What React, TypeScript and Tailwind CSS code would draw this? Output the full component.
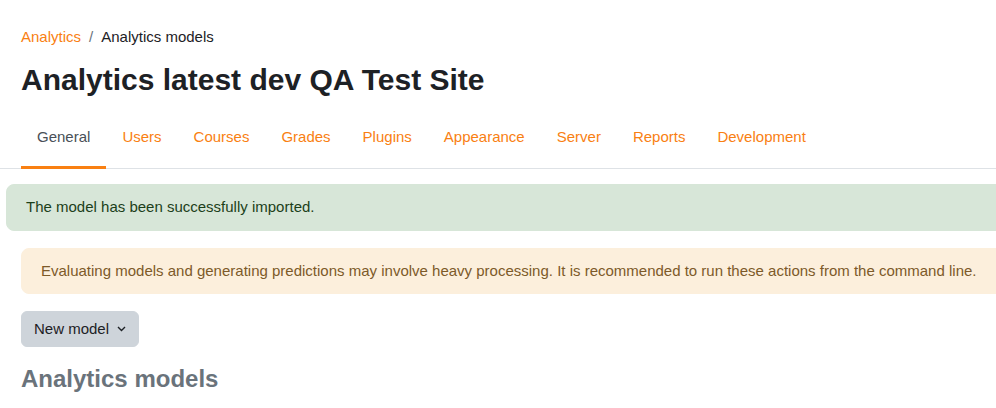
import React from "react";

const tabs = ["General", "Users", "Courses", "Grades", "Plugins", "Appearance", "Server", "Reports", "Development"];

export default function App() {
  return (
    <div className="w-[996px] h-[408px] overflow-hidden bg-white text-[15px] leading-[1.5] text-[#1d2125]" style={{ fontFamily: '"Liberation Sans", Arial, sans-serif' }}>
      <div className="pl-[21px] pt-[26px]">
        <nav className="flex items-center">
          <span className="text-[#f98012]">Analytics</span>
          <span className="px-[8px] text-[#6a737b]">/</span>
          <span>Analytics models</span>
        </nav>
        <h1 className="mt-[13px] text-[30px] leading-[36px] font-bold">Analytics latest dev QA Test Site</h1>
      </div>
      <div className="mt-[9px] border-b border-[#dee2e6] pl-[21px] flex">
        {tabs.map((t, i) => (
          <div
            key={t}
            className={
              i === 0
                ? "px-[16px] pt-[19px] pb-[17px] border-b-[3px] border-[#f98012] text-[#495057] -mb-px"
                : "px-[16px] pt-[19px] pb-[20px] text-[#f98012]"
            }
          >
            {t}
          </div>
        ))}
      </div>
      <div className="pl-[21px] w-[1020px]">
        <div className="mt-[15px] -ml-[15px] rounded-lg bg-[#d7e6d8] border border-[#d7e6d8] text-[#1c3f1a] px-[19px] py-[11px] w-[1020px]">
          The model has been successfully imported.
        </div>
        <div className="mt-[17px] rounded-lg bg-[#fcefdc] border border-[#fcefdc] text-[#7d5a29] px-[19px] py-[11px]">
          Evaluating models and generating predictions may involve heavy processing. It is recommended to run these actions from the command line.
        </div>
        <button className="mt-[17px] flex items-center gap-[8px] rounded-[6px] bg-[#ced4da] border border-[#ced4da] px-[12px] py-[6px] text-[#1d2125] leading-[22px]">
          <span>New model</span>
          <svg width="9" height="6" viewBox="0 0 9 6" fill="none">
            <path d="M1 1l3.5 3.5L8 1" stroke="#1d2125" strokeWidth="1.4" />
          </svg>
        </button>
        <h2 className="mt-[17px] text-[24px] leading-[30px] font-bold text-[#6a737b]">Analytics models</h2>
      </div>
    </div>
  );
}
